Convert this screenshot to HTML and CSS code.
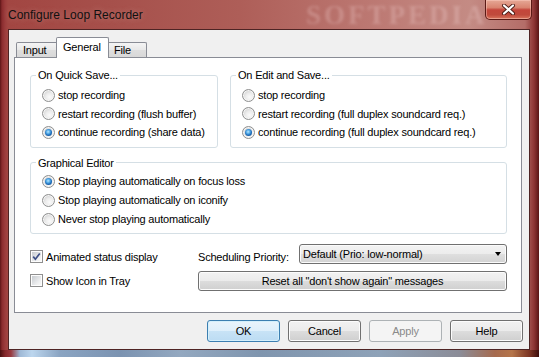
FILE: index.html
```html
<!DOCTYPE html>
<html>
<head>
<meta charset="utf-8">
<title>Configure Loop Recorder</title>
<link rel="stylesheet" href="styles.css">
</head>
<body>
<div class="window">
  <div class="titlebar">
    <span class="title">Configure Loop Recorder</span>
    <span class="wm-title">SOFTPEDIA</span>
    <div class="close">
      <svg width="15" height="11" viewBox="0 0 15 11"><path d="M3 1.5 L12 9.5 M12 1.5 L3 9.5" stroke="#4a1a14" stroke-width="4" stroke-linecap="round"/><path d="M3 1.5 L12 9.5 M12 1.5 L3 9.5" stroke="#fff" stroke-width="2.2" stroke-linecap="round"/></svg>
    </div>
  </div>
  <div class="client">
    <div class="tabs">
      <div class="tab t-input">Input</div>
      <div class="tab active">General</div>
      <div class="tab t-file">File</div>
    </div>
    <div class="panel">
      <div class="top-groups">
        <fieldset class="group g-quick">
          <legend>On Quick Save...</legend>
          <div class="opt r18"><span class="radio"></span>stop recording</div>
          <div class="opt r18"><span class="radio"></span>restart recording (flush buffer)</div>
          <div class="opt r18"><span class="radio on"></span>continue recording (share data)</div>
        </fieldset>
        <fieldset class="group g-edit">
          <legend>On Edit and Save...</legend>
          <div class="opt r18"><span class="radio"></span>stop recording</div>
          <div class="opt r18"><span class="radio"></span>restart recording (full duplex soundcard req.)</div>
          <div class="opt r18"><span class="radio on"></span>continue recording (full duplex soundcard req.)</div>
        </fieldset>
      </div>
      <fieldset class="group g-graph">
        <legend>Graphical Editor</legend>
        <div class="opt r19"><span class="radio on"></span>Stop playing automatically on focus loss</div>
        <div class="opt r19"><span class="radio"></span>Stop playing automatically on iconify</div>
        <div class="opt r19"><span class="radio"></span>Never stop playing automatically</div>
      </fieldset>
      <div class="bottom-grid">
        <div class="opt chk-row low"><span class="check on"><svg width="9" height="9" viewBox="0 0 9 9"><path d="M1.2 4.6 L3.4 7.2 L7.8 1.4" fill="none" stroke="#3d4f86" stroke-width="1.7"/></svg></span>Animated status display</div>
        <div class="sched low">Scheduling Priority:</div>
        <div class="select"><span>Default (Prio: low-normal)</span><span class="arrow"></span></div>
        <div class="opt chk-row"><span class="check"></span>Show Icon in Tray</div>
        <button class="btn reset">Reset all "don't show again" messages</button>
      </div>
    </div>
    <div class="buttons">
      <button class="btn default">OK</button>
      <button class="btn">Cancel</button>
      <button class="btn" disabled>Apply</button>
      <button class="btn">Help</button>
    </div>
  </div>
  <div class="bottom-edge"></div>
</div>
</body>
</html>
```
FILE: styles.css
```css
html, body {
  margin: 0;
  padding: 0;
}
body {
  width: 539px;
  height: 357px;
  overflow: hidden;
  font-family: "Liberation Sans", Arial, sans-serif;
  font-size: 11px;
  letter-spacing: -0.2px;
  color: #000;
}
.window {
  width: 539px;
  height: 357px;
  box-sizing: border-box;
  display: flex;
  flex-direction: column;
  background: linear-gradient(90deg, #5c1516 0px, #8a2c2e 2px, #9b3c3c 5px, #a24642 8px, #a6504b 110px, #ae5e58 240px, #bd7a74 380px, #c48b84 470px, #b46d68 525px, #8e3534 534px, #5a1616 539px);
  position: relative;
}
.titlebar {
  height: 29px;
  display: flex;
  align-items: flex-start;
  position: relative;
  flex: none;
}
.title {
  padding: 8px 0 0 8px;
  font-size: 12px;
  letter-spacing: 0;
  line-height: 14px;
  color: #111;
  text-shadow: 0 0 6px rgba(255, 220, 215, 0.35);
}
.wm-title {
  position: absolute;
  left: 306px;
  top: 0;
  font-family: "Liberation Serif", serif;
  font-weight: bold;
  font-size: 27px;
  letter-spacing: 3px;
  line-height: 30px;
  color: rgba(255, 230, 230, 0.24);
  filter: blur(1.4px);
}
.close {
  margin-left: auto;
  margin-right: 7px;
  width: 47px;
  height: 20px;
  box-sizing: border-box;
  border: 1px solid #5a1a16;
  border-top: none;
  border-radius: 0 0 5px 5px;
  background: linear-gradient(#e6a896 0%, #d98470 40%, #c4463b 52%, #c04a3c 78%, #d9765e 100%);
  box-shadow: inset 0 0 0 1px rgba(255, 210, 200, 0.45);
  display: flex;
  align-items: center;
  justify-content: center;
  position: relative;
  z-index: 1;
}
.client {
  flex: 1;
  margin: 0 9px 0 8px;
  border: 1px solid #4e2424;
  background: #f0f0f0;
  padding: 7px 7px 7px 5px;
  display: flex;
  flex-direction: column;
  min-height: 0;
}
.bottom-edge {
  height: 7px;
  flex: none;
  background: linear-gradient(90deg, #4a1010 0, #84282b 5px, #9a3a40 11px, #9fb9d6 20px, #bcd6ee 32px, #8aa4c2 60px, #7b93b1 120px, #93a8c0 180px, #7f95ae 260px, #8ea2b8 380px, #8b8c97 460px, #a66a4e 495px, #b5754a 512px, #7a3322 530px, #3c0d0b 539px);
}
.tabs {
  height: 20px;
  display: flex;
  align-items: flex-end;
  padding-left: 2px;
  position: relative;
  z-index: 1;
  flex: none;
}
.tab {
  box-sizing: border-box;
  height: 15px;
  border: 1px solid #898c95;
  border-bottom: none;
  border-radius: 2px 2px 0 0;
  background: linear-gradient(#f4f4f4, #e8e8e8 50%, #dedede 50%, #d8d8d8);
  line-height: 14px;
  padding-left: 6px;
}
.t-input { width: 42px; }
.t-file { width: 40px; padding-left: 6px; }
.tab.active {
  width: 53px;
  height: 21px;
  margin: 0 -2px -1px;
  padding-left: 6px;
  line-height: 19px;
  background: #fff;
  position: relative;
  z-index: 2;
}
.panel {
  height: 256px;
  box-sizing: border-box;
  border: 1px solid #898c95;
  background: #fff;
  padding: 10px 14px 0 15px;
  flex: none;
}
.top-groups {
  display: flex;
  gap: 12px;
}
.group {
  margin: 0;
  border: 1px solid #d5dfe5;
  border-radius: 3px;
  padding: 4px 6px 5px 11px;
  min-width: 0;
}
.group legend {
  padding: 0 2px;
  margin-left: -6px;
  line-height: 14px;
}
.g-quick { width: 188px; box-sizing: border-box; }
.g-edit { flex: 1; }
.g-graph {
  margin-top: 8px;
  padding-top: 2px;
  padding-bottom: 4px;
}
.opt {
  display: flex;
  align-items: center;
  gap: 3px;
  white-space: nowrap;
}
.r18 { height: 18.5px; }
.r19 { height: 19px; }
.radio {
  width: 13px;
  height: 13px;
  box-sizing: border-box;
  border-radius: 50%;
  border: 1px solid #8f9090;
  background: radial-gradient(circle at 60% 65%, #fbfbfb 0, #ececec 40%, #d2d2d2 75%, #e8e8e8 100%);
  box-shadow: inset 0 0 0 1px #f6f6f6;
  position: relative;
  flex: none;
}
.radio.on::after {
  content: "";
  position: absolute;
  left: 2px;
  top: 2px;
  width: 7px;
  height: 7px;
  border-radius: 50%;
  background: radial-gradient(circle at 45% 40%, #b9e6ff 0, #5bb0ea 30%, #1c6bb8 60%, #0c3a74 100%);
}
.bottom-grid {
  margin-top: 10px;
  display: grid;
  grid-template-columns: 168px 101px 1fr;
  grid-template-rows: 20px 20px;
  row-gap: 7px;
}
.chk-row { gap: 3px; }
.low { align-self: end; line-height: 14px; }
.sched { white-space: nowrap; }
.check {
  width: 13px;
  height: 13px;
  box-sizing: border-box;
  border: 1px solid #8f8f8f;
  padding: 1px;
  background: linear-gradient(135deg, #c7cbd0, #eeeff0 70%, #f8f8f8) content-box, #fdfdfd;
  display: flex;
  align-items: center;
  justify-content: center;
  flex: none;
}
.check svg { display: block; }
.select {
  box-sizing: border-box;
  height: 20px;
  border: 1px solid #707070;
  border-radius: 3px;
  background: linear-gradient(#f3f3f3 0%, #ececec 50%, #dfdfdf 50%, #d3d3d3 100%);
  box-shadow: inset 0 0 0 1px #fbfbfb;
  display: flex;
  align-items: center;
  justify-content: space-between;
  padding: 0 5px 0 3px;
  white-space: nowrap;
}
.arrow {
  width: 0;
  height: 0;
  border-left: 3.5px solid transparent;
  border-right: 3.5px solid transparent;
  border-top: 4px solid #000;
}
.btn {
  box-sizing: border-box;
  width: 73px;
  height: 22px;
  margin: 0;
  padding: 0;
  border: 1px solid #707070;
  border-radius: 3px;
  background: linear-gradient(#f2f2f2 0%, #ebebeb 50%, #dddddd 50%, #cfcfcf 100%);
  box-shadow: inset 0 0 0 1px #fcfcfc;
  font: inherit;
  letter-spacing: inherit;
  color: #000;
}
.reset {
  grid-column: 2 / 4;
  width: auto;
  height: 20px;
}
.btn.default {
  border-color: #3c7fb1;
  background: linear-gradient(#e9f4fc 0%, #deeffb 50%, #c8e3f6 50%, #bcdcf3 100%);
  box-shadow: inset 0 0 0 1px #d4f0fc;
}
.btn:disabled {
  border-color: #adb2b5;
  background: #f4f4f4;
  box-shadow: none;
  color: #8a8a8a;
}
.buttons {
  margin-top: 7px;
  display: flex;
  justify-content: flex-end;
  gap: 8px;
  margin-right: -1px;
}
```
